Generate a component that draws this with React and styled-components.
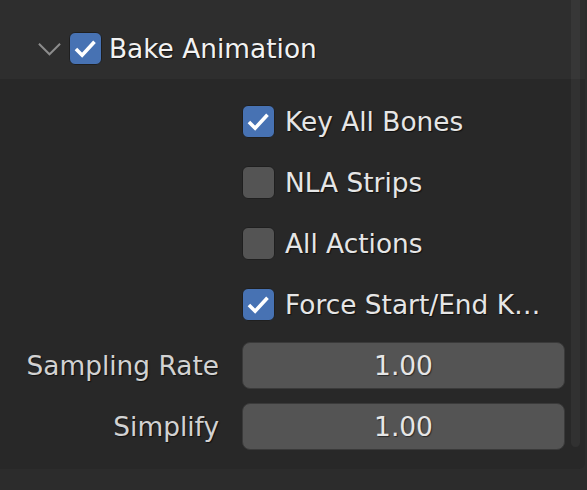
import styled, { createGlobalStyle } from "styled-components"

const GlobalStyle = createGlobalStyle`
  html, body {
    margin: 0;
    padding: 0;
    background: #2c2c2c;
  }
  body {
    font-family: "DejaVu Sans", "Liberation Sans", sans-serif;
  }
`

const colors = {
  header: "#2e2e2e",
  body: "#282828",
  outer: "#2c2c2c",
  checked: "#4772b3",
  unchecked: "#545454",
  field: "#545454",
  text: "#e6e6e6",
  label: "#d2d2d2",
}

const Screen = styled.div`
  width: 587px;
  height: 490px;
  background: ${colors.outer};
  overflow: hidden;
`

const Panel = styled.section`
  position: relative;
  width: 585px;
  height: 469px;
  display: grid;
  grid-template-rows: 79px 1fr;
  background: ${colors.body};
  border-bottom-right-radius: 6px;
  overflow: hidden;
`

const Header = styled.header`
  background: ${colors.header};
  display: flex;
  align-items: center;
  height: 61px;
  padding: 18px 0 0 37px;
  gap: 7px;
`

const HeaderTitle = styled.span`
  font-size: 26.4px;
  color: #f2f2f2;
  text-shadow: 1px 1px 1px rgba(0, 0, 0, 0.6);
`

const Body = styled.div`
  display: grid;
  grid-template-columns: 242px 323px;
  grid-auto-rows: 61px;
  padding-top: 12px;
`

const Label = styled.span`
  display: flex;
  align-items: center;
  justify-content: flex-end;
  padding-right: 23px;
  font-size: 26.4px;
  color: ${colors.label};
  text-shadow: 1px 1px 1px rgba(0, 0, 0, 0.6);
`

const Cell = styled.div`
  display: flex;
  align-items: center;
  gap: 10px;
  ${(p) => (p.$control ? "grid-column: 2;" : "")}
`

const Box = styled.span`
  flex: none;
  width: 31px;
  height: 31px;
  border-radius: 6px;
  border: 1px solid #1f1f1f;
  background: ${(p) => (p.$checked ? colors.checked : colors.unchecked)};
  display: flex;
  align-items: center;
  justify-content: center;
`

const CheckText = styled.span`
  font-size: 26.4px;
  color: ${colors.text};
  white-space: nowrap;
  text-shadow: 1px 1px 1px rgba(0, 0, 0, 0.6);
`

const Field = styled.div`
  width: 100%;
  height: 45px;
  box-sizing: content-box;
  border: 1px solid #3a3a3a;
  border-radius: 8px;
  background: ${colors.field};
  display: flex;
  align-items: center;
  justify-content: center;
  font-size: 26.4px;
  color: ${colors.text};
  text-shadow: 1px 1px 1px rgba(0, 0, 0, 0.5);
`

const ScrollTrack = styled.div`
  position: absolute;
  top: 0;
  left: 571px;
  width: 9px;
  height: 447px;
  background: rgba(255, 255, 255, 0.045);
  border-radius: 0 0 5px 5px;
`

function Check({ checked }) {
  return (
    <Box $checked={checked}>
      {checked ? (
        <svg width="27" height="27" viewBox="0 0 24 24">
          <path
            d="M3.5 12.5 L9 18 L20 6"
            fill="none"
            stroke="#fff"
            strokeWidth="3.2"
            strokeLinejoin="miter"
          />
        </svg>
      ) : null}
    </Box>
  )
}

function Chevron() {
  return (
    <svg width="25" height="14" viewBox="0 0 26 14">
      <path d="M2 1.5 L13 12.5 L24 1.5" fill="none" stroke="#8c8c8c" strokeWidth="2" />
    </svg>
  )
}

const toggles = [
  { label: "Key All Bones", checked: true },
  { label: "NLA Strips", checked: false },
  { label: "All Actions", checked: false },
  { label: "Force Start/End K…", checked: true },
]

const fields = [
  { label: "Sampling Rate", value: "1.00" },
  { label: "Simplify", value: "1.00" },
]

export default function App() {
  return (
    <Screen>
      <GlobalStyle />
      <Panel>
        <Header>
          <Chevron />
          <Check checked />
          <HeaderTitle>Bake Animation</HeaderTitle>
        </Header>
        <Body>
          {toggles.map((t) => (
            <Cell key={t.label} $control>
              <Check checked={t.checked} />
              <CheckText>{t.label}</CheckText>
            </Cell>
          ))}
          {fields.map((f) => [
            <Label key={f.label}>{f.label}</Label>,
            <Cell key={f.label + "-value"}>
              <Field>{f.value}</Field>
            </Cell>,
          ])}
        </Body>
        <ScrollTrack />
      </Panel>
    </Screen>
  )
}
